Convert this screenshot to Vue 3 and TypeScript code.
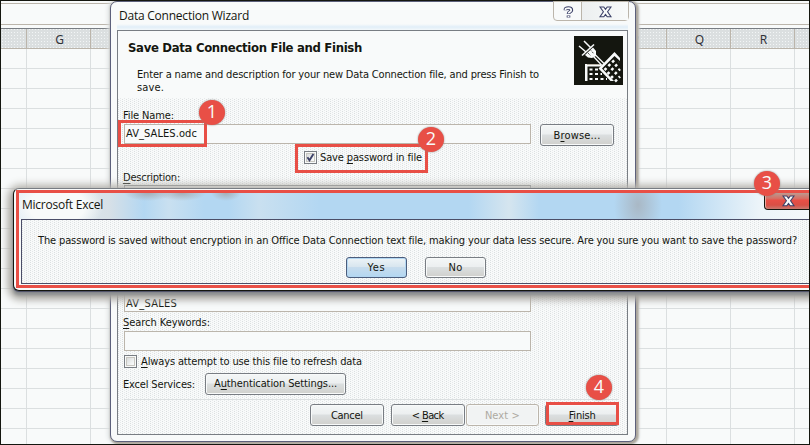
<script setup lang="ts">
import { ref, type Directive } from 'vue'

const columns: string[] = ['', 'G', '', '', '', '', '', '', '', '', 'P', 'Q', 'R', '']
const rows = 20
const savePassword = ref(true)
const alwaysRefresh = ref(false)

// Spreads a label's letters over the given width in pixels.
const vFit: Directive<HTMLElement, number> = {
  mounted(el, binding) {
    const width = el.getBoundingClientRect().width
    const count = (el.textContent ?? '').length
    if (count > 0) el.style.letterSpacing = `${(binding.value - width) / count}px`
  },
}
</script>

<template>
  <div class="screen">
    <div class="sheet">
      <div class="formula"></div>
      <div class="heads">
        <div v-for="(c, i) in columns" :key="i" class="head">{{ c }}</div>
      </div>
      <div v-for="r in rows" :key="r" class="row">
        <div v-for="(c, i) in columns" :key="i" class="cell"></div>
      </div>
    </div>

    <section class="wizard">
      <header class="wizard-title">
        <span v-fit="130" class="segoe">Data Connection Wizard</span>
        <div class="caption">
          <div class="cap help">
            <svg width="11" height="13" viewBox="0 0 11 13"><path d="M2.5 4.3V3.2Q2.7 2 5.4 2Q8.4 2 8.4 4.2Q8.4 5.4 6.6 6.2Q5.5 6.8 5.5 8M5.5 9.6V11.6" fill="none" stroke="#3c4168" stroke-width="3.6" /><path d="M2.5 4V3.2Q2.7 2.1 5.4 2.1Q8.2 2.1 8.2 4.2Q8.2 5.3 6.5 6.1Q5.5 6.6 5.5 7.6M5.5 9.9V11.2" fill="none" stroke="#f8fafa" stroke-width="1.8" /></svg>
          </div>
          <div class="cap shut">
            <svg width="13" height="12" viewBox="0 0 13 12"><path d="M1 1H4.8L6.5 3.3L8.2 1H12L8.6 5.8L12 10.8H8.2L6.5 8.4L4.8 10.8H1L4.4 5.8Z" fill="#f8fafa" stroke="#3c4168" stroke-width="1.1" /></svg>
          </div>
        </div>
      </header>

      <div class="client">
        <div class="banner">
          <div class="intro">
            <h1><span v-fit="234">Save Data Connection File and Finish</span></h1>
            <p><span v-fit="402">Enter a name and description for your new Data Connection file, and press Finish to</span><br /><span v-fit="27">save.</span></p>
          </div>
          <svg class="plug" width="49" height="49" viewBox="0 0 49 49">
            <rect width="49" height="49" fill="#14160f" />
            <path d="M5 10L12 16M10 5L17 12" stroke="#f8fafa" stroke-width="1.5" />
            <path d="M8 19.5L20 8.5" stroke="#f8fafa" stroke-width="1.6" />
            <path d="M11 19L19 11.5L22 15L22 20L18 22L14 21.5Z" fill="#f8fafa" />
            <path d="M14 17L17 20M17 14.5L20 18" stroke="#14160f" stroke-width="1" stroke-dasharray="1 1.2" />
            <path d="M19.5 20.5L28 29.5M21.5 19L30 27.5" stroke="#f8fafa" stroke-width="1.3" />
            <path d="M11 28H27V30.5H13.5V45H11Z" fill="#f8fafa" />
            <path d="M13 28.5H26" stroke="#b9b4a8" stroke-width="1" />
            <g stroke="#f8fafa" stroke-width="2" stroke-dasharray="3 2.5"><path d="M15.5 33.5H24M15.5 38H28M15.5 43H33" /></g>
            <path d="M24.5 32.5L40.5 16L46 22V25L40.5 20L28 32.5L40 45H36.5Z" fill="#f8fafa" />
            <g stroke="#f8fafa" stroke-width="2.5" stroke-dasharray="2.8 2.6"><path d="M30.5 34L41 23.5M33.5 38L45 26.5M37 42L46 33M41 45.5L46 40.5" /></g>
          </svg>
        </div>

        <div class="form">
          <label class="lbl"><span v-fit="51">File Name:</span></label>
          <div class="line">
            <div class="field"><span v-fit="71">AV_SALES.odc</span></div>
            <button class="btn browse"><span v-fit="47">B<u>r</u>owse...</span></button>
          </div>
          <div class="save">
            <span class="box"><svg v-if="savePassword" width="9" height="9" viewBox="0 0 9 9"><path d="M1.4 4.2L3.5 7.2L7.4 1" fill="none" stroke="#3c4168" stroke-width="1.9" /></svg></span>
            <span class="tick"><span v-fit="102">Save <u>p</u>assword in file</span></span>
          </div>
          <label class="lbl"><span v-fit="57"><u>D</u>escription:</span></label>
          <div class="field tall"></div>
          <div class="field named"><span v-fit="51">AV_SALES</span></div>
          <label class="lbl search"><span v-fit="87"><u>S</u>earch Keywords:</span></label>
          <div class="field words"></div>
          <div class="refresh">
            <span class="box"><svg v-if="alwaysRefresh" width="9" height="9" viewBox="0 0 9 9"><path d="M1.4 4.2L3.5 7.2L7.4 1" fill="none" stroke="#3c4168" stroke-width="1.9" /></svg></span>
            <span class="tick"><span v-fit="221"><u>A</u>lways attempt to use this file to refresh data</span></span>
          </div>
          <div class="services">
            <span class="svc"><span v-fit="72">Excel Services:</span></span>
            <button class="btn auth"><span v-fit="123">A<u>u</u>thentication Settings...</span></button>
          </div>
          <div class="rule"></div>
          <footer class="actions">
            <button class="btn"><span v-fit="32">Cancel</span></button>
            <button class="btn back"><span v-fit="32">&lt; <u>B</u>ack</span></button>
            <button class="btn next" disabled><span v-fit="35">Next &gt;</span></button>
            <button class="btn finish"><span v-fit="27"><u>F</u>inish</span></button>
          </footer>
        </div>
      </div>
    </section>

    <section class="alert">
      <div class="frame">
        <header class="alert-title">
          <span v-fit="81" class="segoe">Microsoft Excel</span>
          <div class="alert-close">
            <svg width="13" height="12" viewBox="0 0 13 12"><path d="M1 1H4.8L6.5 3.3L8.2 1H12L8.6 5.8L12 10.8H8.2L6.5 8.4L4.8 10.8H1L4.4 5.8Z" fill="#f8fafa" stroke="#3c4168" stroke-width="1.1" /></svg>
          </div>
        </header>
        <div class="alert-body">
          <p><span v-fit="759">The password is saved without encryption in an Office Data Connection text file, making your data less secure. Are you sure you want to save the password?</span></p>
          <div class="answers">
            <button class="btn yes"><span v-fit="18">Yes</span></button>
            <button class="btn no"><span v-fit="14">No</span></button>
          </div>
        </div>
      </div>
    </section>

    <div class="mark m1"></div>
    <div class="mark m2"></div>
    <div class="mark m4"></div>
    <div class="dot d1">1</div>
    <div class="dot d2">2</div>
    <div class="dot d3">3</div>
    <div class="dot d4">4</div>
    <div class="edge"></div>
  </div>
</template>

<style>
body { margin: 0; overflow: hidden; }
</style>

<style scoped>
* { box-sizing: border-box; }
.screen {
  position: relative;
  width: 810px;
  height: 445px;
  overflow: hidden;
  background: #f8fafa;
  color: #14160f;
  font: 11px/14px "DejaVu Sans Condensed", "Noto Sans", sans-serif;
  white-space: nowrap;
}
.segoe { font: 12px/16px "Open Sans", sans-serif; }
u { text-decoration: underline; text-underline-offset: 1.5px; text-decoration-thickness: 1px; }
svg { display: block; }
p, h1 { margin: 0; }

.edge { position: absolute; inset: 0; border: 1px solid #14160f; }
.sheet { padding-top: 3px; overflow: hidden; height: 445px; }
.formula { height: 26px; border-top: 1px solid #bbb5ab; border-bottom: 1px solid #787d83; background: linear-gradient(#bbb5ab, #bbb5ab) 0 20px / 100% 1px no-repeat; }
.heads, .row { display: flex; margin-left: -37px; width: 900px; }
.heads { height: 20px; border-bottom: 1px solid #bbb5ab; background: conic-gradient(at 1px 1px, transparent 75%, #f2f5f6 0) 0 0 / 3px 3px, #dbdfe0; }
.head { flex: 0 0 64px; padding-left: 2px; border-right: 1px solid #bbb5ab; text-align: center; font: 12px/21px "Noto Sans", sans-serif; color: #303238; }
.row { height: 20px; border-bottom: 1px solid #dbdfe0; }
.cell { flex: 0 0 64px; border-right: 1px solid #dbdfe0; }

.wizard {
  position: absolute;
  left: 110px;
  top: 1px;
  width: 526px;
  height: 441px;
  padding: 0 7px 7px 6px;
  border: 1px solid #5c607b;
  border-radius: 7px;
  background: #f8fafa;
  box-shadow: 1px 1px 2px 1px #aaa59b, 2px 1px 2px 1px #c9c7c0, 0 0 4px 2px #dbdfe0;
}
.wizard-title { display: flex; justify-content: space-between; height: 28px; padding: 6px 0 0 2px; background: linear-gradient(#f8fafa 22px, #e1eef8 25px, #f3f8fa); }
.caption { display: flex; width: 76px; height: 20px; margin: -7px -1px 0 0; border: 1px solid #bbb5ab; border-radius: 0 0 4px 4px; background: #f8fafa; }
.cap { display: flex; align-items: center; justify-content: center; padding-top: 2px; }
.help { width: 28px; padding-left: 1px; border-right: 1px solid #bbb5ab; }
.shut { width: 46px; padding-left: 1px; background: linear-gradient(90deg, #eceff0, #f8fafa); }
.client {
  height: 405px;
  border: 1px solid #787d83;
  background:
    conic-gradient(at 1px 1px, transparent 75%, #dbdfe0 0) 0 0 / 4px 2px,
    conic-gradient(at 1px 1px, transparent 75%, #e6e9ea 0) 2px 1px / 4px 2px,
    #f8fafa;
}
.banner { display: flex; justify-content: space-between; height: 67px; padding: 5px 4px 0 10px; background: #f8fafa; }
h1 { font: bold 13px/16px "DejaVu Sans Condensed", sans-serif; margin-top: 4px; }
.intro p { padding-top: 12px; margin-left: 9px; line-height: 13px; }
.form { padding: 10px 8px 0 6px; }
.lbl { display: block; height: 14px; margin-left: -1px; padding-top: 1px; }
.line { display: flex; gap: 9px; height: 22px; margin-top: 2px; }
.field { width: 407px; height: 20px; padding: 2px 1px; border: 1px solid #bbb5ab; background: #f8fafa; }
.btn {
  width: 74px;
  height: 22px;
  padding: 1px 0 0;
  border: 1px solid #787d83;
  border-radius: 3px;
  background: linear-gradient(#f4f7f7 0, #eceff0 45%, #dbdfe0 50%, #d0d0cc 100%);
  box-shadow: inset 0 0 0 1px #f8fafa;
  color: #14160f;
  font: inherit;
  text-align: center;
}
.save { display: flex; gap: 3px; height: 13px; margin: 5px 0 0 180px; }
.box { display: flex; align-items: center; justify-content: center; flex: none; width: 13px; height: 13px; border: 1px solid #787d83; background: linear-gradient(135deg, #cfd2d2, #f8fafa 75%); box-shadow: inset 0 0 0 1px #f8fafa, inset 0 0 0 2px #c7c6c0; }
.save + .lbl { margin-top: 6px; }
.tall { height: 75px; margin-top: 1px; border-color: #787d83; }
.named { margin-top: 32px; height: 20px; padding-top: 4px; }
.search { margin-top: 3px; }
.words { margin-top: 2px; }
.refresh { display: flex; gap: 4px; height: 13px; margin-top: 4px; }
.services { display: flex; height: 22px; margin-top: 5px; }
.svc { width: 82px; margin-left: -1px; padding-top: 5px; }
.auth { width: 141px; }
.services .auth { padding-top: 0; }
.rule { height: 1px; margin-top: 4px; background: #dbdfe0; }
.actions { display: flex; margin: 4px 0 0 186px; }
.back { margin-left: 7px; }
.next { margin-left: 1px; border-color: #bbb5ab; background: #f1f3f3; color: #aeaaa2; }
.finish { margin-left: 6px; }

.alert {
  position: absolute;
  left: 13px;
  top: 188px;
  width: 811px;
  height: 103px;
  padding: 1px 2px 2px;
  border: 1px solid #14160f;
  border-top-color: #787d83;
  border-radius: 6px;
  background: #f8fafa;
  box-shadow: 0 1px 1px #4b4e66, 0 4px 3px #8c8f91, 0 5px 8px 3px #aaa8a2, 0 1px 8px 4px #bdbbb5;
}
.frame { height: 98px; border: 3px solid #e84f46; padding-left: 2px; background: #f8fafa; }
.alert-title {
  display: flex;
  align-items: flex-start;
  height: 26px;
  margin-left: -2px;
  padding: 4px 0 0 3px;
  background:
    radial-gradient(ellipse 46px 30px at 38px 13px, #f8fafa 60%, transparent),
    radial-gradient(ellipse 24px 8px at 129px 0, #a5afb7, transparent),
    radial-gradient(ellipse 24px 8px at 163px 0, #a5afb7, transparent),
    radial-gradient(ellipse 15px 8px at 207px 0, #a5afb7, transparent),
    radial-gradient(ellipse 24px 38px at 619px 12px, #a9b8c5, transparent),
    linear-gradient(90deg, #e4eff7, #d7e0e7 90px, #b3d7f2 125px, #c9e0f0 150px, #b3d7f2 185px, #b3d7f2 210px, #c9e0f0 240px, #b3d7f2 300px, #b3d7f2 450px, #d5e5ef 490px, #b3d7f2 520px, #b3d7f2 660px, #ecf4f9 740px, #f5f9fa);
}
.alert-close { display: flex; justify-content: center; flex: none; width: 48px; height: 17px; margin: -4px 0 0 661px; padding-top: 2px; border: 1px solid #14160f; border-top: 0; border-radius: 0 0 4px 4px; background: linear-gradient(#bc9a90, #d76e63 35%, #e84f46 45%, #d94f45 75%, #c9796f); box-shadow: inset 1px 0 #e9aaa2; }
.alert-body {
  height: 65px;
  padding: 14px 0 0 16px;
  border: 1px solid #4b4e68;
  background:
    conic-gradient(at 1px 1px, transparent 75%, #dbdfe0 0) 0 0 / 4px 2px,
    conic-gradient(at 1px 1px, transparent 75%, #e6e9ea 0) 2px 1px / 4px 2px,
    #f8fafa;
}
.answers { display: flex; gap: 18px; margin: 9px 0 0 308px; }
.answers .btn { width: 61px; height: 21px; }
.answers .yes { border-color: #4b5d7c; background: linear-gradient(#edf4f7, #d9e6ef 45%, #c7dced 50%, #b3d7f2); box-shadow: inset 0 0 0 1px #b3d7f2; }

.mark { position: absolute; border: 3px solid #e84f46; }
.m1 { left: 118px; top: 120px; width: 89px; height: 27px; }
.m2 { left: 295px; top: 144px; width: 133px; height: 29px; }
.m4 { left: 546px; top: 402px; width: 73px; height: 23px; }
.dot { position: absolute; width: 26px; height: 25px; border-radius: 50%; background: #e84f46; box-shadow: 0 0 2px #8c8580; color: #f8fafa; text-align: center; font: 18px/23px "Open Sans", sans-serif; }
.d1 { left: 199px; top: 100px; }
.d2 { left: 418px; top: 127px; }
.d3 { left: 754px; top: 171px; }
.d4 { left: 586px; top: 375px; }
</style>
